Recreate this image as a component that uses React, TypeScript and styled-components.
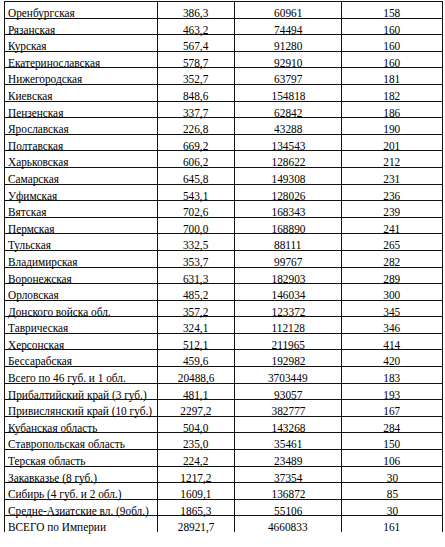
import React from 'react';
import styled, { createGlobalStyle } from 'styled-components';

type Row = [string, string, string, string];

const rows: Row[] = [
  ['Оренбургская', '386,3', '60961', '158'],
  ['Рязанская', '463,2', '74494', '160'],
  ['Курская', '567,4', '91280', '160'],
  ['Екатеринославская', '578,7', '92910', '160'],
  ['Нижегородская', '352,7', '63797', '181'],
  ['Киевская', '848,6', '154818', '182'],
  ['Пензенская', '337,7', '62842', '186'],
  ['Ярославская', '226,8', '43288', '190'],
  ['Полтавская', '669,2', '134543', '201'],
  ['Харьковская', '606,2', '128622', '212'],
  ['Самарская', '645,8', '149308', '231'],
  ['Уфимская', '543,1', '128026', '236'],
  ['Вятская', '702,6', '168343', '239'],
  ['Пермская', '700,0', '168890', '241'],
  ['Тульская', '332,5', '88111', '265'],
  ['Владимирская', '353,7', '99767', '282'],
  ['Воронежская', '631,3', '182903', '289'],
  ['Орловская', '485,2', '146034', '300'],
  ['Донского войска обл.', '357,2', '123372', '345'],
  ['Таврическая', '324,1', '112128', '346'],
  ['Херсонская', '512,1', '211965', '414'],
  ['Бессарабская', '459,6', '192982', '420'],
  ['Всего по 46 губ. и 1 обл.', '20488,6', '3703449', '183'],
  ['Прибалтийский край (3 губ.)', '481,1', '93057', '193'],
  ['Привислянский край (10 губ.)', '2297,2', '382777', '167'],
  ['Кубанская область', '504,0', '143268', '284'],
  ['Ставропольская область', '235,0', '35461', '150'],
  ['Терская область', '224,2', '23489', '106'],
  ['Закавказье (8 губ.)', '1217,2', '37354', '30'],
  ['Сибирь (4 губ. и 2 обл.)', '1609,1', '136872', '85'],
  ['Средне-Азиатские вл. (9обл.)', '1865,3', '55106', '30'],
  ['ВСЕГО по Империи', '28921,7', '4660833', '161'],
];

const GlobalStyle = createGlobalStyle`
  body {
    margin: 0;
    background: #ffffff;
  }
`;

const Page = styled.div`
  padding: 1px 0 0 4px;
  height: 547px;
  box-sizing: border-box;
  overflow: hidden;
`;

// black grid background shows through the 1px gaps as cell borders
const Grid = styled.div`
  display: grid;
  grid-template-columns: 152px 76px 106px 100px;
  grid-auto-rows: 15.6px;
  gap: 1px;
  padding: 1px 1px 0 1px;
  width: 439px;
  box-sizing: border-box;
  background: #111;
`;

const Cell = styled.div<{ $name?: boolean }>`
  background: #fff;
  white-space: nowrap;
  text-align: ${(p) => (p.$name ? 'left' : 'center')};
  padding-left: ${(p) => (p.$name ? '3px' : '0')};
`;

// the source table uses a narrow 10pt Times face; squeeze it a little
const Text = styled.span<{ $name?: boolean }>`
  display: inline-block;
  color: #000;
  font-family: "Liberation Serif", "Times New Roman", serif;
  font-size: 13px;
  line-height: 15.6px;
  transform: translateY(0.5px) scaleX(0.87);
  transform-origin: ${(p) => (p.$name ? 'left' : 'center')} center;
`;

export default function App() {
  return (
    <Page>
      <GlobalStyle />
      <Grid>
        {rows.map((r, i) => (
          <React.Fragment key={i}>
            <Cell $name>
              <Text $name>{r[0]}</Text>
            </Cell>
            <Cell>
              <Text>{r[1]}</Text>
            </Cell>
            <Cell>
              <Text>{r[2]}</Text>
            </Cell>
            <Cell>
              <Text>{r[3]}</Text>
            </Cell>
          </React.Fragment>
        ))}
      </Grid>
    </Page>
  );
}
